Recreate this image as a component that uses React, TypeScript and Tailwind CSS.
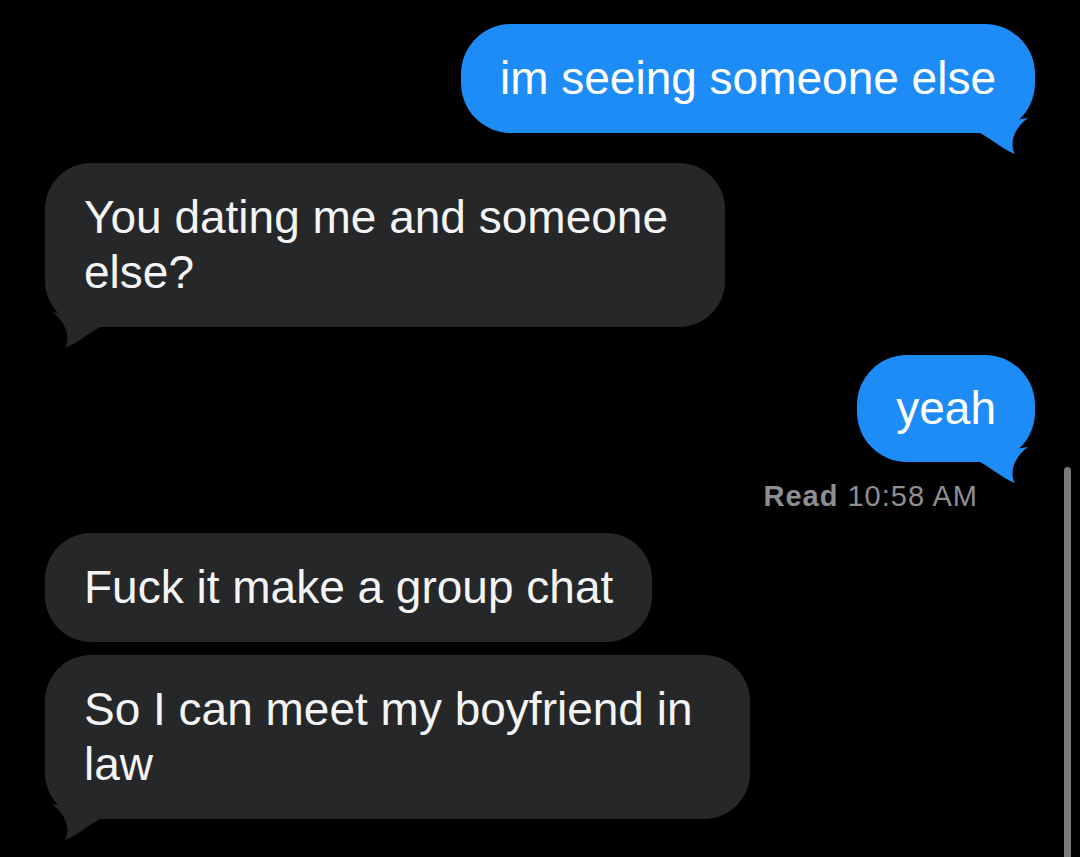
import React from "react";

const BLUE = "#1e8cf6";
const GRAY = "#262729";

function RightTail() {
  return (
    <svg
      className="absolute right-[3px] bottom-[-22px]"
      width="60"
      height="42"
      viewBox="0 0 60 42"
    >
      <path d="M5 12 L56 5 C42 15 37 31 43 41 C32 37 21 27 8 20 Z" fill={BLUE} />
    </svg>
  );
}

function LeftTail() {
  return (
    <svg
      className="absolute left-[3px] bottom-[-22px]"
      width="60"
      height="42"
      viewBox="0 0 60 42"
    >
      <path d="M55 12 L4 5 C18 15 23 31 17 41 C28 37 39 27 52 20 Z" fill={GRAY} />
    </svg>
  );
}

const textCls =
  "text-[46px] leading-[55px] text-[#f4f4f4] whitespace-nowrap";

export default function App() {
  return (
    <div
      className="relative w-[1080px] h-[857px] bg-black overflow-hidden"
      style={{ fontFamily: "'Liberation Sans', Arial, sans-serif" }}
    >
      <div className="flex flex-col px-[45px] pt-[24px]">
        {/* sent 1 */}
        <div className="relative self-end w-fit rounded-[50px] bg-[#1e8cf6] px-[39px] py-[27px]">
          <RightTail />
          <p className={`relative ${textCls} text-white`}>im seeing someone else</p>
        </div>

        {/* received 1 */}
        <div className="relative self-start mt-[30px] w-[680px] rounded-[46px] bg-[#262729] px-[39px] py-[27px]">
          <LeftTail />
          <p className={`relative ${textCls}`}>
            You dating me and someone
            <br />
            else?
          </p>
        </div>

        {/* sent 2 */}
        <div className="relative self-end mt-[28px] w-fit rounded-[50px] bg-[#1e8cf6] px-[39px] py-[26px]">
          <RightTail />
          <p className={`relative ${textCls} text-white`}>yeah</p>
        </div>

        {/* read receipt */}
        <div className="self-end mt-[17px] mr-[57px] text-[29px] leading-[34px] tracking-[1px] text-[#8e8e93] whitespace-nowrap">
          <span className="font-bold">Read</span> 10:58 AM
        </div>

        {/* received 2 */}
        <div className="relative self-start mt-[20px] w-fit rounded-[46px] bg-[#262729] px-[39px] py-[27px]">
          <p className={`relative ${textCls}`}>Fuck it make a group chat</p>
        </div>

        {/* received 3 */}
        <div className="relative self-start mt-[13px] w-[705px] rounded-[46px] bg-[#262729] px-[39px] py-[27px]">
          <LeftTail />
          <p className={`relative ${textCls}`}>
            So I can meet my boyfriend in
            <br />
            law
          </p>
        </div>
      </div>

      {/* scroll indicator */}
      <div className="absolute right-[9px] top-[467px] w-[7px] h-[420px] rounded-full bg-[#7b7b7b]" />
    </div>
  );
}
